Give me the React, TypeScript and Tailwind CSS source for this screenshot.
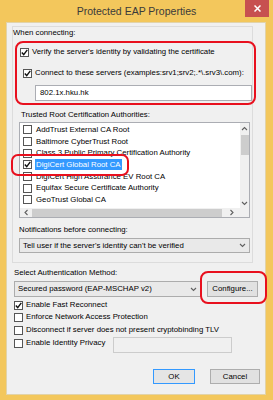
import React from "react";

const font = { fontFamily: '"Liberation Sans", Arial, sans-serif' };

const Check = ({ checked = false }: { checked?: boolean }) => (
  <span className="flex h-[9px] w-[9px] shrink-0 items-center justify-center border border-[#555555] bg-white">
    {checked && (
      <svg width="7" height="7" viewBox="0 0 7 7">
        <path d="M0.8 3.6 L2.7 5.6 L6.3 0.8" fill="none" stroke="#111" strokeWidth="1.4" />
      </svg>
    )}
  </span>
);

const Chevron = ({ dir = "down" }: { dir?: "down" | "up" | "left" | "right" }) => {
  const d = {
    down: "M1 2 L3.5 4.5 L6 2",
    up: "M1 5 L3.5 2.5 L6 5",
    left: "M4.5 1 L2 3.5 L4.5 6",
    right: "M2.5 1 L5 3.5 L2.5 6",
  }[dir];
  return (
    <svg width="7" height="7" viewBox="0 0 7 7">
      <path d={d} fill="none" stroke="#606060" strokeWidth="1.1" />
    </svg>
  );
};

const certs = [
  { name: "AddTrust External CA Root" },
  { name: "Baltimore CyberTrust Root" },
  { name: "Class 3 Public Primary Certification Authority" },
  { name: "DigiCert Global Root CA", checked: true, selected: true },
  { name: "DigiCert High Assurance EV Root CA" },
  { name: "Equifax Secure Certificate Authority" },
  { name: "GeoTrust Global CA" },
];

const CheckRow = ({ label, checked }: { label: string; checked?: boolean }) => (
  <div className="flex h-[10px] items-center gap-[3px]">
    <Check checked={checked} />
    <span className="whitespace-nowrap">{label}</span>
  </div>
);

export default function App() {
  return (
    <div
      className="relative flex h-[400px] w-[273px] flex-col overflow-hidden bg-[#f3c75c] text-[7.8px] leading-[10px] text-black"
      style={font}
    >
      {/* title bar */}
      <div className="grid h-[22px] shrink-0 grid-cols-[1fr_auto_1fr]">
        <div />
        <div className="flex items-center text-[10.5px] text-[#3a3a3a]">Protected EAP Properties</div>
        <div className="flex justify-end pr-[4px]">
          <div className="flex h-[17px] w-[24px] items-center justify-center bg-[#c75050]">
            <svg width="7" height="7" viewBox="0 0 7 7">
              <path d="M0.5 0.5 L6.5 6.5 M6.5 0.5 L0.5 6.5" stroke="#fff" strokeWidth="1.5" />
            </svg>
          </div>
        </div>
      </div>

      {/* client area */}
      <div className="mb-[5px] ml-[6px] mr-[7px] flex flex-1 flex-col border border-[#e2d3a8] bg-[#f0f0f0]">
        {/* frame */}
        <div className="ml-[5px] mt-[3px] flex h-[237px] w-[241px] flex-col border border-[#dcdcdc]">
          <div className="mt-[1px]">When connecting:</div>

          <div className="ml-[7px] mt-[9px]">
            <CheckRow checked label="Verify the server's identity by validating the certificate" />
          </div>
          <div className="ml-[10px] mt-[11px]">
            <CheckRow checked label="Connect to these servers (examples:srv1;srv2;.*\.srv3\.com):" />
          </div>
          <div className="ml-[22px] mt-[7px] flex h-[16px] w-[217px] shrink-0 items-center border border-[#abadb3] bg-white pl-[4px]">
            802.1x.hku.hk
          </div>

          <div className="ml-[8px] mt-[9px]">Trusted Root Certification Authorities:</div>

          {/* cert list */}
          <div className="ml-[6px] mt-[2px] flex h-[96px] w-[231px] shrink-0 flex-col border border-[#abadb3] bg-white">
            <div className="flex min-h-0 flex-1">
              <div className="flex flex-1 flex-col overflow-hidden pt-[1px]">
                {certs.map((c) => (
                  <div key={c.name} className="flex h-[11.7px] shrink-0 items-center gap-[3px] pl-[3px]">
                    <Check checked={c.checked} />
                    <span
                      className={
                        c.selected
                          ? "whitespace-nowrap bg-[#3399ff] px-[1px] leading-[11px] text-white"
                          : "whitespace-nowrap px-[1px]"
                      }
                    >
                      {c.name}
                    </span>
                  </div>
                ))}
              </div>
              <div className="flex w-[9px] flex-col items-center bg-[#f0f0f0]">
                <div className="flex h-[10px] items-center">
                  <Chevron dir="up" />
                </div>
                <div className="mt-[2px] h-[20px] w-[8px] bg-[#cdcdcd]" />
                <div className="flex-1" />
                <div className="flex h-[10px] items-center">
                  <Chevron dir="down" />
                </div>
              </div>
            </div>
            <div className="flex h-[9px] shrink-0 items-center bg-[#f0f0f0]">
              <div className="flex w-[12px] justify-center">
                <Chevron dir="left" />
              </div>
              <div className="h-[8px] w-[190px] bg-[#cdcdcd]" />
              <div className="flex flex-1 justify-center">
                <Chevron dir="right" />
              </div>
              <div className="h-[9px] w-[9px] bg-[#f0f0f0]" />
            </div>
          </div>

          <div className="ml-[6px] mt-[7px]">Notifications before connecting:</div>
          <div className="ml-[6px] mt-[3px] flex h-[15px] w-[231px] shrink-0 items-center justify-between border border-[#acacac] bg-[#e9e9e9] pl-[3px] pr-[3px]">
            <span>Tell user if the server's identity can't be verified</span>
            <Chevron />
          </div>
        </div>

        {/* lower section */}
        <div className="ml-[7px] mt-[5px]">Select Authentication Method:</div>
        <div className="ml-[7px] mt-[3px] flex items-center gap-[6px]">
          <div className="flex h-[16px] w-[187px] items-center justify-between border border-[#acacac] bg-[#e9e9e9] pl-[3px] pr-[3px]">
            <span>Secured password (EAP-MSCHAP v2)</span>
            <Chevron />
          </div>
          <div className="flex h-[16px] w-[51px] items-center justify-center border border-[#adadad] bg-[#e1e1e1]">
            Configure...
          </div>
        </div>

        <div className="ml-[7px] mt-[3px] flex flex-col">
          <CheckRow checked label="Enable Fast Reconnect" />
          <div className="mt-[2px]">
            <CheckRow label="Enforce Network Access Protection" />
          </div>
          <div className="mt-[3px]">
            <CheckRow label="Disconnect if server does not present cryptobinding TLV" />
          </div>
          <div className="mt-[3px] flex items-start">
            <CheckRow label="Enable Identity Privacy" />
            <div className="ml-auto mr-[33px] mt-[-1px] h-[16px] w-[119px] border border-[#cccccc] bg-[#f0f0f0]" />
          </div>
        </div>

        <div className="mr-[5px] mt-[16px] flex justify-end gap-[15px]">
          <div className="flex h-[15px] w-[42px] items-center justify-center border border-[#3399ff] bg-[#e5e5e5]">OK</div>
          <div className="flex h-[15px] w-[50px] items-center justify-center border border-[#adadad] bg-[#e1e1e1]">
            Cancel
          </div>
        </div>
      </div>

      {/* red annotation marks */}
      <div className="absolute left-[15px] top-[41px] h-[64px] w-[241px] rounded-[8px] border-[2.5px] border-[#e8101e]" />
      <div className="absolute left-[11px] top-[154px] h-[22px] w-[118px] rounded-[7px] border-[2.5px] border-[#e8101e]" />
      <div className="absolute left-[200px] top-[271px] h-[33px] w-[67px] rounded-[8px] border-[2.5px] border-[#e8101e]" />
    </div>
  );
}
